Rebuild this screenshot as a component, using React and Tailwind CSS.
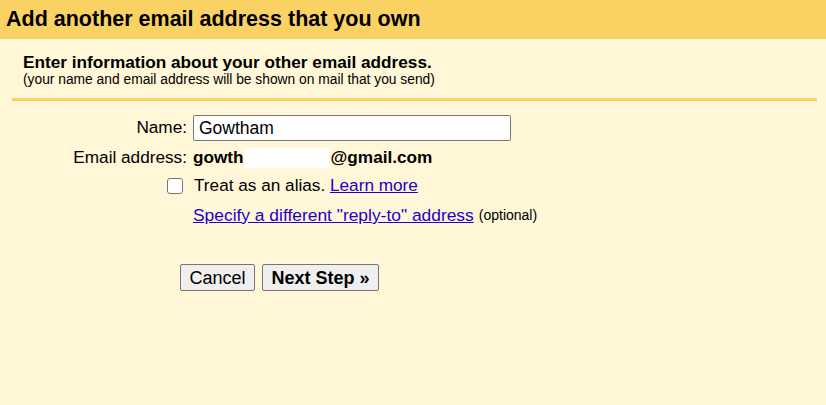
export default function App() {
  return (
    <div className="w-[826px] h-[405px] bg-[#fff7d7] overflow-hidden text-black" style={{ fontFamily: '"Liberation Sans", Arial, sans-serif' }}>
      <div className="h-[39px] bg-[#fad163] pl-[6px] flex items-center">
        <h1 className="text-[21.5px] font-bold leading-none">Add another email address that you own</h1>
      </div>
      <div className="pl-[12px] pr-[9px]">
        <div className="pl-[11px] pt-[13px] pb-[10px] border-b-[3px] border-[#fad163]">
          <div className="text-[17.2px] font-bold leading-[20px]">Enter information about your other email address.</div>
          <div className="text-[13.8px] leading-[16px]">(your name and email address will be shown on mail that you send)</div>
        </div>
      </div>
      <div className="pt-[14px] text-[17.2px]">
        <div className="flex items-center h-[26px]">
          <div className="w-[188px] text-right pr-[1px]">Name:</div>
          <input
            className="ml-[5px] w-[318px] h-[26px] border border-[#777] rounded-[2px] bg-white px-[5px] text-[17.5px] outline-none"
            defaultValue="Gowtham"
          />
        </div>
        <div className="flex items-center h-[22px] mt-[6px]">
          <div className="w-[188px] text-right pr-[1px]">Email address:</div>
          <div className="ml-[5px] font-bold flex items-center">
            <span>gowth</span>
            <span className="inline-block w-[85px] h-[20px] bg-white mr-[2px]"></span>
            <span>@gmail.com</span>
          </div>
        </div>
        <div className="flex items-center h-[22px] mt-[6px]">
          <div className="w-[167px]"></div>
          <span className="w-[16px] h-[16px] border border-[#767676] rounded-[3px] bg-white"></span>
          <span className="ml-[11px]">Treat as an alias. <a className="underline text-[#2200cc]" href="#">Learn more</a></span>
        </div>
        <div className="flex items-center h-[22px] mt-[7px]">
          <div className="w-[193px]"></div>
          <a className="text-[#2200cc] underline text-[17.4px]" href="#">Specify a different "reply-to" address</a>
          <span className="ml-[5px] text-[14px]">(optional)</span>
        </div>
        <div className="flex items-center mt-[38px]">
          <div className="w-[180px]"></div>
          <button className="w-[75px] h-[27px] border border-[#767676] rounded-[2px] bg-[#efefef] text-[18px]">Cancel</button>
          <button className="ml-[7px] w-[117px] h-[27px] border border-[#767676] rounded-[2px] bg-[#efefef] text-[18px] font-bold">Next Step »</button>
        </div>
      </div>
    </div>
  );
}
